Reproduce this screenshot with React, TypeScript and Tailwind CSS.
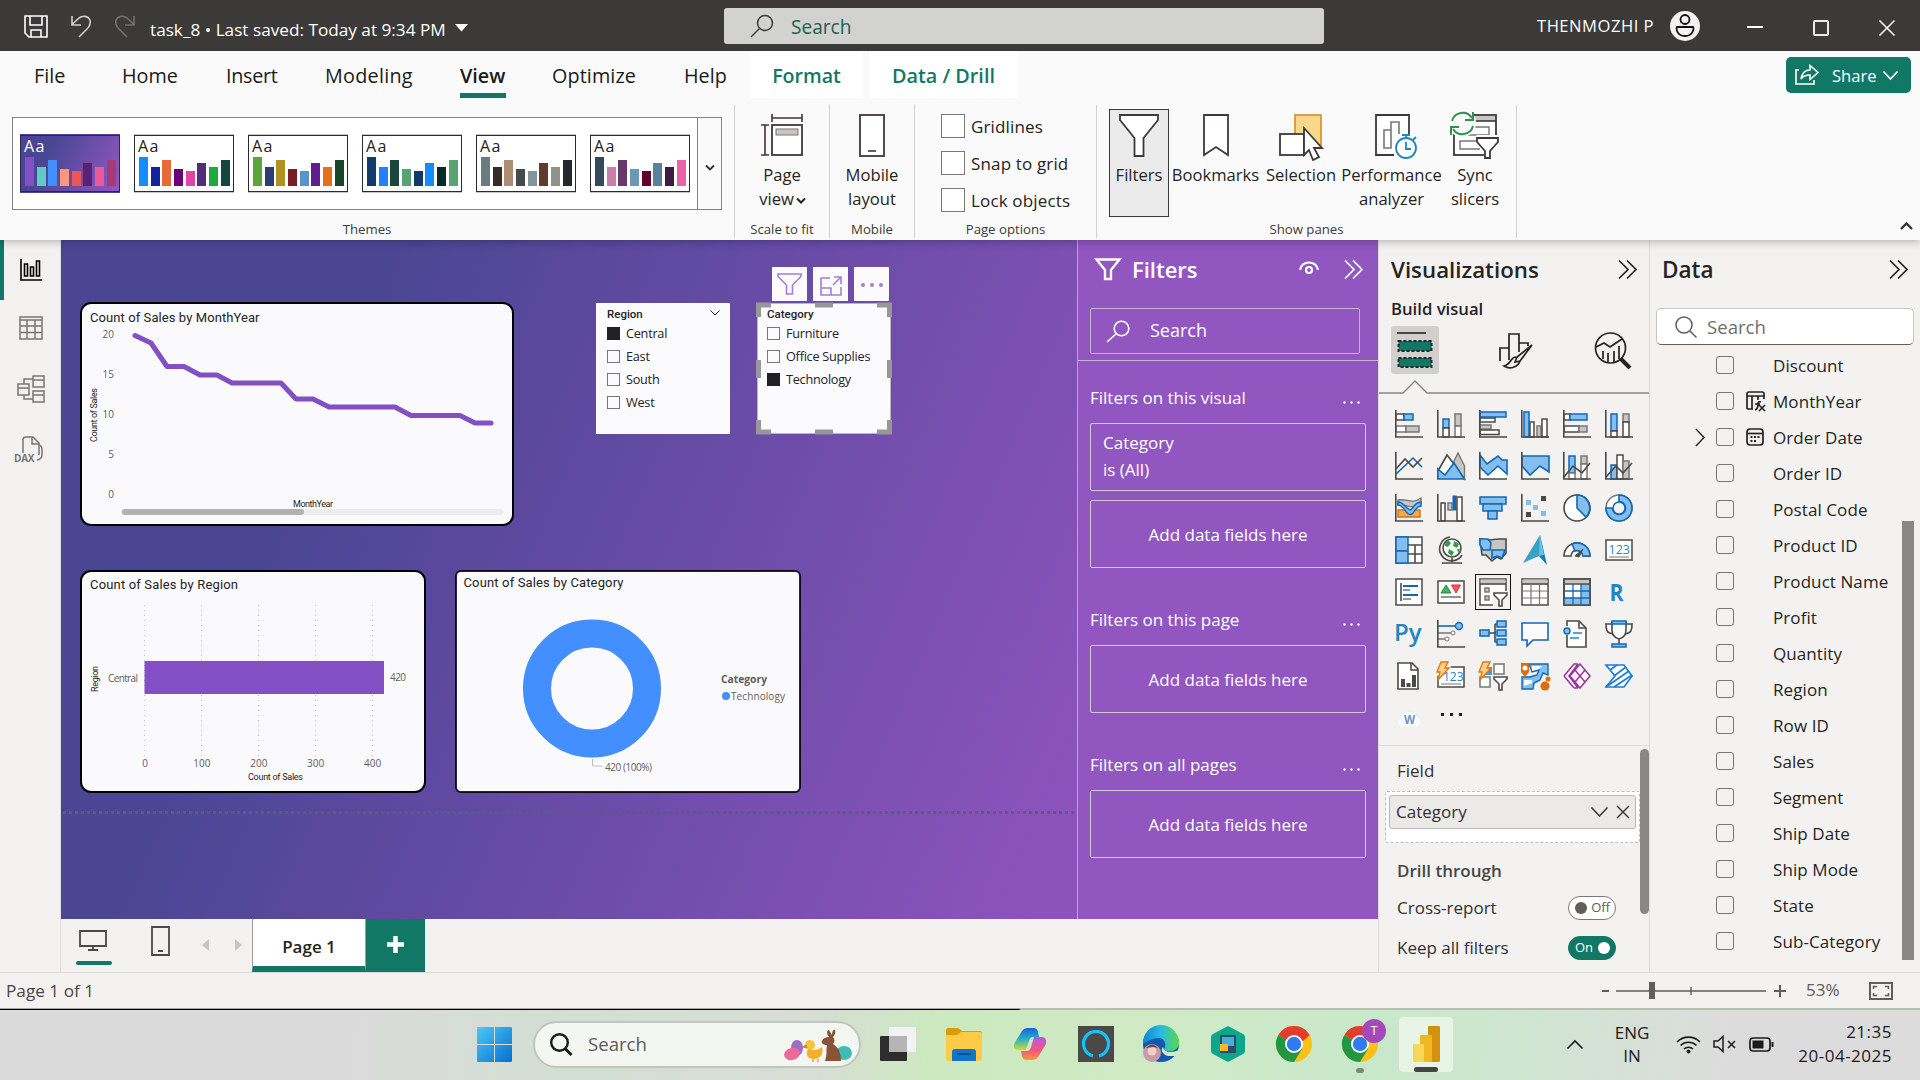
import React from "react";

const D = "#4b4a48";
const B = "#1068b8";
const L = "#83beec";
const G = "#c8c6c4";
const M = "#797775";
const W = "#ffffff";

type RectProps = { x: number; y: number; w: number; h: number; f?: string; s?: string; sw?: number };
const R = ({ x, y, w, h, f = W, s = M, sw = 1.5 }: RectProps) => (
  <rect x={x} y={y} width={w} height={h} fill={f} stroke={s} strokeWidth={sw} />
);
const P = ({ d, s = D, f = "none", w = 1.6 }: { d: string; s?: string; f?: string; w?: number }) => (
  <path d={d} stroke={s} fill={f} strokeWidth={w} />
);
const Axes = () => <P d="M.8 0V27H28" />;

const visuals: React.ReactNode[] = [
  <><R x={1} y={4} w={8} h={6} s={D} /><R x={9} y={4} w={9} h={6} f={L} s={B} /><R x={1} y={16} w={10} h={6} /><R x={11} y={16} w={13} h={6} f={G} /><Axes /></>,
  <><R x={6} y={9} w={6} h={9} f={L} s={B} /><R x={6} y={18} w={6} h={9} s={D} /><R x={18} y={4} w={6} h={12} f={G} /><R x={18} y={16} w={6} h={11} /><Axes /></>,
  <><R x={1} y={2} w={26} h={5} f={L} s={B} /><R x={1} y={8} w={15} h={4} s={D} /><R x={1} y={15} w={11} h={4} f={G} /><R x={1} y={20} w={19} h={4.5} s={D} /><Axes /></>,
  <><R x={3} y={2} w={5} h={25} f={L} s={B} /><R x={9} y={12} w={4} h={15} s={D} /><R x={16} y={16} w={4} h={11} f={G} /><R x={21} y={9} w={5} h={18} s={D} /><Axes /></>,
  <><R x={1} y={4} w={6} h={6} s={D} /><R x={7} y={4} w={17} h={6} f={L} s={B} /><R x={1} y={16} w={15} h={6} s={D} /><R x={16} y={16} w={8} h={6} f={G} /><Axes /></>,
  <><R x={6} y={4} w={6} h={17} f={L} s={B} /><R x={6} y={21} w={6} h={6} s={D} /><R x={18} y={4} w={6} h={8} f={G} /><R x={18} y={12} w={6} h={15} s={D} /><Axes /></>,
  <><P d="M1 22L18 6l9 9" s={B} /><P d="M1 17L10 7l8 8 9-9" /><Axes /></>,
  <><path d="M16 11L21 1l6.5 13v13z" fill={G} stroke={M} strokeWidth="1.4" /><P d="M1 19L10 3l7 9-9 13z" f={W} /><P d="M.8 17v10h26.6L17 11 8 23z" f={L} s={B} /></>,
  <><P d="M1 3l7 9L19 4l4 4h5v14l-9-8L9 23l-8-8z" f={L} s={B} /><path d="M1 17l8 8 10-9 8 7v4H1z" fill="#fff" /><Axes /></>,
  <><P d="M1 4h27v16l-9-6-10 9-8-9z" f={L} s={B} /><Axes /></>,
  <><R x={6} y={4} w={6} h={17} f={L} s={B} /><R x={6} y={21} w={6} h={6} /><R x={18} y={4} w={6} h={8} f={G} /><R x={18} y={12} w={6} h={15} /><P d="M1 25l9-11 9 7 8-10" /><Axes /></>,
  <><R x={6} y={13} w={6} h={14} f={L} s={B} /><R x={12} y={3} w={6} h={24} s={D} /><R x={18} y={9} w={6} h={18} f={G} /><P d="M1 25l10-11 7 7 9-10" /><Axes /></>,
  <><P d="M3 16h22v7H3z" f="#f7a94b" s="#d87010" w={1.4} /><P d="M3 6c9-2 13 5 23-2v6c-10 6-14 0-23 1z" f={G} s={M} w={1.4} /><P d="M3 11c7 0 8 12 14 9 3-2 4-8 9-8v-4c-8 1-8 8-11 8-4-1-6-8-12-8z" f={L} s={B} w={1.4} /><Axes /></>,
  <><R x={4} y={9} w={4} h={18} s={D} /><R x={11} y={9} w={4} h={7} f={G} /><R x={16} y={2} w={3} h={14} f={B} s={B} sw={1} /><R x={20} y={3} w={5} h={24} s={D} /><Axes /></>,
  <><R x={1} y={3} w={26} h={7} f={L} s={B} /><R x={4} y={10} w={19} h={7} f={L} s={B} /><R x={9} y={17} w={9} h={8} f={L} s={B} /></>,
  <><rect x="5" y="6" width="5" height="5" fill={L} /><rect x="12" y="11" width="5" height="5" fill={L} /><rect x="20" y="17" width="5" height="5" fill={L} /><rect x="20" y="2" width="5" height="5" fill={D} /><rect x="5" y="18" width="5" height="5" fill={D} /><Axes /></>,
  <><circle cx="14" cy="14" r="13" fill={W} stroke={D} strokeWidth="1.6" /><P d="M14 1a13 13 0 0 1 9 22L14 14z" f={L} s={B} /></>,
  <><circle cx="14" cy="14" r="13" fill={W} stroke={M} strokeWidth="1.5" /><P d="M14 1a13 13 0 1 1-13 13h6.5A6.5 6.5 0 1 0 14 7.500z" f={L} s={B} /><circle cx="14" cy="14" r="6" fill="#f3f2f1" stroke={B} strokeWidth="1.5" /></>,
  <><R x={1} y={1} w={26} h={26} s={D} /><R x={1} y={1} w={12} h={14} f={L} s={B} /><R x={1} y={15} w={12} h={12} f={L} s={B} /><P d="M13 9h14M20 9v18M13 18h14" /></>,
  <><circle cx="15" cy="12" r="9" fill={W} stroke={D} strokeWidth="1.6" /><path d="M8 8l3-4 3 3-3 4-3-1zM17 5l5 3-2 4-4-2zM12 13l5 3-2 4-4-3zM20 13h3l-2 4z" fill="#2f9e44" /><P d="M13 1A12 12 0 1 0 25 19M15 22v4M5 27h20" /></>,
  <><path d="M1 3l9 1 9-1h8v14l-5 6-4-2-5 4-6-6H3z" fill={G} stroke={D} strokeWidth="1.6" /><P d="M1 3h8l3 4-1 7H4L1 9zM13 14h13l-3 8-5-2-5 2z" f={L} s={B} /></>,
  <><path d="M19-1L2 27l16-7z" fill="#38a0cc" /><path d="M19-1l7 30-8-9z" fill="#1479b8" /><path d="M19-1l-1 21 5-1z" fill="#64c4dc" /></>,
  <><path d="M1 20a13 13 0 0 1 26 0h-7a6 6 0 0 0-12 0z" fill={W} stroke={D} strokeWidth="1.6" /><path d="M9 8a13 13 0 0 1 18 12h-7a6 6 0 0 0-8-5z" fill={L} stroke={B} strokeWidth="1.6" /><path d="M12 20l8-7-4 8z" fill={D} stroke={D} /></>,
  <><R x={1} y={4} w={26} h={20} s={D} /><text x="3.500" y="17.500" fontSize="12.500" fill="#2488cc" fontFamily="Open Sans, sans-serif">123</text><P d="M4 21h20" s={M} w={1} /></>,
  <><R x={1} y={1} w={26} h={26} s={D} /><P d="M6 5v18" /><P d="M8 8h15M8 17h15" s={B} w={2.2} /><P d="M8 12h7M8 21h8" s={M} w={1.6} /></>,
  <><R x={1} y={3} w={26} h={22} s={D} /><path d="M4 15l5-8 5 8z" fill="#4cae5c" stroke="#258a3a" /><path d="M14.500 7h9l-4.500 8z" fill="#f0575f" stroke="#d13438" /><P d="M4 19h20" s={M} /></>,
  <><R x={1} y={1} w={26} h={26} s={D} /><rect x="1.500" y="1.500" width="25" height="4" fill={G} /><P d="M1 6h26" /><R x={6} y={10} w={4} h={4} f={G} /><R x={6} y={18} w={4} h={4} f={G} /><path d="M13 13h17v17H14z" fill="#f3f2f1" /><P d="M15 15h13v2l-5 5v6h-3v-6l-5-5z" f={W} /></>,
  <><R x={1} y={1} w={26} h={26} s={D} /><rect x="1.500" y="1.500" width="25" height="4" fill={G} /><P d="M1 6h26" /><P d="M1 13h26M1 20h26M10 6v21M18.500 6v21" s={M} w={1.2} /></>,
  <><R x={1} y={1} w={26} h={26} s={D} /><rect x="18" y="6" width="9" height="21" fill={L} /><rect x="1" y="20" width="26" height="7" fill={L} /><rect x="1.500" y="1.500" width="25" height="4" fill={G} /><P d="M1 13h26M10 6v21M18 6v21M1 20h26" s={B} w={1.3} /><P d="M1 6h26M1 1h26v26H1z" /></>,
  <text x="4.500" y="22.500" fontSize="24" fontWeight="700" fill="#2185c5" fontFamily="Open Sans, sans-serif" textLength="14" lengthAdjust="spacingAndGlyphs">R</text>,
  <text x="-1" y="20.500" fontSize="24" fontWeight="600" fill="#2185c5" fontFamily="Open Sans, sans-serif">Py</text>,
  <><P d="M1 6h18" s={B} /><circle cx="22" cy="6" r="3.500" fill={L} stroke={B} strokeWidth="1.4" /><P d="M1 13h13M1 19h7" s={M} /><circle cx="16" cy="13" r="2" fill={W} stroke={M} /><circle cx="10" cy="19" r="2" fill={W} stroke={M} /><Axes /></>,
  <><P d="M10 13h7M16 4v18M16 4h3M16 22h3" /><R x={1} y={10} w={9} h={6} f={L} s={B} /><R x={18} y={1} w={9} h={6} f={L} s={B} /><R x={18} y={10} w={9} h={6} f={L} s={B} /><R x={18} y={19} w={9} h={6} f={L} s={B} /></>,
  <P d="M1 3h26v17H12l-6 6v-6H1z" s={B} f="#fbfbfb" />,
  <><P d="M4 1h12l7 7v19H4z" f={W} /><P d="M16 1v7h7" /><path d="M1 6h7v9H1z" fill="#f3f2f1" /><circle cx="4" cy="11" r="3" fill={L} stroke={B} strokeWidth="1.400" /><P d="M10 13h9M7 18h9" s="#2488cc" /></>,
  <><P d="M7 4H1c0 8 2 9 7 10M21 4h6c0 8-2 9-7 10" f={W} /><P d="M7 2h14v8c0 5-3 8-7 9-4-1-7-4-7-9zM14 19v6" f={W} /><R x={7} y={1} w={14} h={3} f={L} s={B} /><R x={7} y={24} w={14} h={3} f={L} s={B} /></>,
  <><P d="M3 1h14l6 6v20H3z" f={W} /><P d="M16 1v7h7" /><path d="M6 17h4v8H6zM11.500 21h4v4h-4zM17 13h4v12h-4z" fill={D} /></>,
  <><R x={1} y={5} w={26} h={20} s={D} /><path d="M-1-1h13l2 6-6 9H-1z" fill="#f3f2f1" /><text x="6" y="18.500" fontSize="12" fill="#2488cc" fontFamily="Open Sans, sans-serif">123</text><P d="M4 22h20" s={M} w={1} /><path d="M4 0h7L8 6h4L1 18l2-8H0z" fill="#ffd08a" stroke="#de7a13" strokeWidth="1.400" /></>,
  <><R x={1} y={15} w={10} h={10} s={M} /><R x={15} y={2} w={10} h={10} /><path d="M5 5h8v8H5z" fill="#5098cc" /><path d="M4 0h7L8 6h4L1 18l2-8H0z" fill="#ffd08a" stroke="#de7a13" strokeWidth="1.400" /><path d="M12 14h17v16H17z" fill="#f3f2f1" /><P d="M15 15h13v2l-5 5v6h-3v-6l-5-5z" f={W} /></>,
  <><path d="M8 2h19v11l-5-2-3 7-6 3-1 6H1V15h8l7-2 2-5-7 2z" fill={L} stroke={B} strokeWidth="1.400" /><path d="M11 4h10l-3 3-7 2zM3 18h8v3l-8 3z" fill="#fff" /><path d="M0 1h8v9l-4 5-4-5z" fill="#e06c08" /><circle cx="4" cy="6" r="2.500" fill={W} /><circle cx="24" cy="24" r="4.500" fill="#e06c08" /><circle cx="27" cy="17" r="2.500" fill="#e06c08" /></>,
  <g fill="none" stroke="#9a35a0" strokeWidth="1.500"><path d="M1 14L11 2h4M11 26L1 14M11 26h4M15 2L6 14l9 12M17 2l10 12-10 12-10-12z" fill="#fbf6fb" /><path d="M12 8l10 12M12 20L22 8" /></g>,
  <><P d="M1 3h18l8 11-8 11H1l9-11z" s="#1b7bdd" f="#fff" /><P d="M5 8L12 3M9 14L21 5M1 25L24 9M9 25l18-12" s="#1b7bdd" /></>,
  <><path d="M5 23a5 5 0 0 1 0-9 9 8 0 0 1 17-2 6 6 0 0 1 1 11z" fill="#fbfbfb" stroke="#eceff3" /><text x="9" y="20" fontSize="11.500" fontWeight="700" fill="#6c94c0" fontFamily="Open Sans, sans-serif">W</text></>,
  <><rect x="4" y="9" width="3" height="3" fill="#222" /><rect x="13" y="9" width="3" height="3" fill="#222" /><rect x="22" y="9" width="3" height="3" fill="#222" /></>,
];

const themes: { fg: string; dark?: boolean; c: string[] }[] = [
  { fg: "#fff", dark: true, c: ["#8250c4", "#5ecbc8", "#438fff", "#ff977e", "#eb5757", "#5b2071", "#ec5a96", "#a43b76"] },
  { fg: "#222", c: ["#118dff", "#12239e", "#e66c37", "#6b007b", "#e044a7", "#4f2f78", "#1aab40", "#15453f"] },
  { fg: "#222", c: ["#5aa63c", "#2f3c70", "#b09023", "#7a1c24", "#5b93cf", "#5f1f8a", "#e66f1c", "#16472b"] },
  { fg: "#222", c: ["#103c6e", "#1f83ff", "#1c4540", "#57a472", "#0f3a6b", "#118dff", "#0a2b26", "#57a472"] },
  { fg: "#222", c: ["#6b7a7c", "#372b28", "#ae8c70", "#404b4a", "#82969a", "#5f3a31", "#91918a", "#22292a"] },
  { fg: "#222", c: ["#324a5c", "#c97eab", "#69386c", "#6b98b5", "#63002c", "#5a8199", "#3f1c3f", "#e963a8"] },
];
const barH = [29, 19, 26, 17, 15, 23, 19, 26];

const Theme = ({ t }: { t: (typeof themes)[0] }) => (
  <div className={`w-[100px] shrink-0 border-y ${t.dark ? "border-[#4b4694] bg-linear-115 from-[#4b4694] from-30% to-[#9256c1]" : "border-[#c8c6c4] bg-white"}`}>
    <div className={`h-[57px] border ${t.dark ? "border-[#2c2750]" : "border-[#2b2b2b]"}`}>
      <div className="h-[19px] pl-[3px] text-[16px] leading-[21px] tracking-[1.5px]" style={{ color: t.fg }}>Aa</div>
      <div className="flex h-[31px] items-end gap-[2.700px] pl-1">
        {t.c.map((c, i) => <div key={i} className="w-[9px]" style={{ height: barH[i], background: c }} />)}
      </div>
    </div>
  </div>
);

const Svg = ({ w, h, c = "", children }: { w: number; h: number; c?: string; children: React.ReactNode }) => (
  <svg width={w} height={h} viewBox={`0 0 ${w} ${h}`} fill="none" stroke="currentColor" className={`block shrink-0 overflow-visible ${c}`}>{children}</svg>
);

const Chevrons = ({ c = "" }: { c?: string }) => (
  <Svg w={19} h={19} c={c}><path d="M1 .5l9 9-9 9M9 .5l9 9-9 9" strokeWidth="1.700" /></Svg>
);

const Group = ({ w, label, children }: { w: string; label: string; children: React.ReactNode }) => (
  <div className={`flex h-[133px] shrink-0 flex-col border-r border-[#d2d0ce] ${w}`}>
    <div className="h-[112px] shrink-0">{children}</div>
    <div className="h-[21px] shrink-0 text-center text-[13.200px] leading-[25px] text-[#3b3a39]">{label}</div>
  </div>
);

const Big = ({ w, icon, a, b, on }: { w: string; icon: React.ReactNode; a: string; b?: React.ReactNode; on?: boolean }) => (
  <div className={`flex h-[108px] shrink-0 flex-col items-center border pt-1 ${w} ${on ? "border-[#3b3a39] bg-[#ebebeb]" : "border-transparent"}`}>
    <div className="flex h-[49px] items-start">{icon}</div>
    <div className="whitespace-nowrap text-center text-[16.600px] leading-6 text-[#252423]">{a}{b && <><br />{b}</>}</div>
  </div>
);

const TitleBar = () => (
  <div className="flex h-[51px] bg-[#3b3a38] text-white">
    <div className="flex w-[724px] shrink-0 pt-[15px]">
      <Svg w={24} h={23} c="ml-[24px]"><path d="M1 1h22v21H5l-4-4zM6 1v9h12V1M7 22v-7h10v7" strokeWidth="1.600" /></Svg>
      <Svg w={20} h={23} c="ml-[23px] text-[#d2d0ce]"><path d="M1 1v9h9M1 9.500L8 3c4-3 9-2 11 2 1 4 0 6-3 9l-8 8" strokeWidth="1.600" /></Svg>
      <Svg w={20} h={23} c="ml-6 text-[#73716f]"><path d="M19 1v9h-9M19 9.500L12 3C8 0 3 1 1 5 0 9 1 11 4 14l8 8" strokeWidth="1.600" /></Svg>
      <div className="ml-[15px] w-[297px] whitespace-nowrap text-[17.200px] leading-[29px]">task_8 • Last saved: Today at 9:34 PM</div>
      <Svg w={13} h={8} c="ml-[8px] mt-[9px]"><path d="M0 0h13L6.500 7.500z" fill="currentColor" stroke="none" /></Svg>
    </div>
    <div className="mt-2 flex h-9 w-[600px] shrink-0 items-center rounded-[3px] bg-[#d2d2d0]">
      <Svg w={24} h={24} c="ml-[26px] text-[#3b3a39]"><circle cx="15" cy="9" r="7.500" strokeWidth="1.500" /><path d="M9.500 14.500L1 23" strokeWidth="1.500" /></Svg>
      <div className="ml-[17px] pt-[2px] text-[19.100px] text-[#1f6152]">Search</div>
    </div>
    <div className="ml-[213px] flex h-[52px] items-center">
      <div className="w-[133px] whitespace-nowrap pt-px text-[16.600px] tracking-[.5px]">THENMOZHI P</div>
      <Svg w={30} h={30}><circle cx="15" cy="15" r="15" fill="#f3f2f1" stroke="none" /><circle cx="15" cy="8.500" r="4.500" stroke="#111" strokeWidth="1.800" /><path d="M7 16h16c1 0 1 9-8 9s-9-9-8-9z" stroke="#111" strokeWidth="1.800" /></Svg>
      <div className="ml-[47px] mt-[2px] h-[1.500px] w-4 bg-white" />
      <div className="ml-[50px] mt-1 h-4 w-4 rounded-[2px] border-2 border-white/90" />
      <Svg w={16} h={16} c="ml-[50px] mt-1"><path d="M.5.5l15 15M15.500.5l-15 15" strokeWidth="1.500" /></Svg>
    </div>
  </div>
);

const Tabs = () => (
  <div className="flex h-[47px] pl-[34px] text-[19.800px] leading-[49px] text-[#1b1a19]">
    <div className="w-[88px]">File</div>
    <div className="w-[104px]">Home</div>
    <div className="w-[99px] tracking-[-.3px]">Insert</div>
    <div className="w-[135px] tracking-[.25px]">Modeling</div>
    <div className="w-[92px]"><div className="h-full w-[46px] border-b-[5px] border-[#117865] font-semibold">View</div></div>
    <div className="w-[132px] tracking-[.1px]">Optimize</div>
    <div className="w-[66px]">Help</div>
    <div className="w-[113px] bg-white text-center text-[19.600px] font-semibold text-[#117865]">Format</div>
    <div className="ml-[6px] w-[149px] bg-white text-center text-[19.800px] font-semibold text-[#117865]">Data / Drill</div>
    <div className="ml-[768px] mt-[6px] flex h-9 w-[125px] items-center rounded-[5px] bg-[#117865] text-[16.600px] text-white">
      <Svg w={24} h={22} c="ml-[9px]"><path d="M4 6H1v14h18v-4" strokeWidth="1.600" /><path d="M6 15C7 9 10 6 15 6V1.500l8 7-8 7V11c-4 0-7 1-9 4z" strokeWidth="1.600" /></Svg>
      <span className="ml-[13px]">Share</span>
      <Svg w={15} h={9} c="ml-[6px]"><path d="M.5.5l7 7.500 7-7.500" strokeWidth="1.700" /></Svg>
    </div>
  </div>
);

const Check = ({ label }: { label: string }) => (
  <div className="flex h-[37px] items-start text-[17px] leading-[26px] tracking-[.15px] text-[#252423]">
    <div className="mr-[6px] h-6 w-6 border border-[#7a7876] bg-white" />{label}
  </div>
);

const Ribbon = () => (
  <div className="flex h-[142px] pt-[7px]">
    <Group w="w-[735px] pl-3 [&>div:last-child]:pr-3" label="Themes">
      <div className="pt-3">
        <div className="flex h-[93px] w-[710px] items-center border border-[#868482] bg-white">
          <div className="flex w-[684px] gap-[14px] pl-[7px]">{themes.map((t, i) => <Theme key={i} t={t} />)}</div>
          <div className="flex h-full flex-1 items-center justify-center border-l border-[#868482] bg-[#fafafa] pt-2">
            <Svg w={8} h={6}><path d="M0 .5l4 4 4-4" stroke="#333" strokeWidth="1.800" /></Svg>
          </div>
        </div>
      </div>
    </Group>
    <Group w="w-[95px]" label="Scale to fit">
      <div className="pt-1"><Big w="w-full" a="Page" b={<>view<Svg w={8} h={6} c="ml-[3px] inline-block align-middle"><path d="M0 .5l4 4 4-4" strokeWidth="2" /></Svg></>} icon={
        <Svg w={42} h={43} c="text-[#3b3a39]"><rect x="11" y="11" width="30" height="30" fill="#fff" strokeWidth="1.800" /><path d="M11 0v8M41 0v8M11 4h30M0 11h8M0 41h8M4 11v30" strokeWidth="1.600" /><rect x="15" y="15" width="22" height="6" fill={G} stroke={M} /></Svg>} /></div>
    </Group>
    <Group w="w-[85px]" label="Mobile">
      <div className="pt-1"><Big w="w-full" a="Mobile" b="layout" icon={
        <Svg w={26} h={43} c="text-[#3b3a39]"><rect x="1" y="1" width="24" height="41" fill="#fff" strokeWidth="1.800" /><path d="M9 37h8" strokeWidth="1.600" /></Svg>} /></div>
    </Group>
    <Group w="w-[182px]" label="Page options">
      <div className="pl-[26px] pt-[9px]"><Check label="Gridlines" /><Check label="Snap to grid" /><Check label="Lock objects" /></div>
    </Group>
    <Group w="w-[420px]" label="Show panes">
      <div className="flex pl-3 pt-1">
        <Big on w="w-[60px]" a="Filters" icon={<Svg w={40} h={43} c="text-[#3b3a39]"><path d="M1 1h38v5L24.500 24v18h-9V24L1 6z" fill="#fff" strokeWidth="1.800" /></Svg>} />
        <Big w="w-[93px]" a="Bookmarks" icon={<Svg w={26} h={43} c="text-[#3b3a39]"><path d="M1 1h24v40L13 33 1 41z" fill="#fff" strokeWidth="1.800" /></Svg>} />
        <Big w="w-[78px]" a="Selection" icon={<Svg w={44} h={46} c="text-[#3b3a39]"><rect x="16" y="1" width="26" height="30" fill="#f8d88c" stroke="#e08a1e" strokeWidth="1.600" /><rect x="1" y="20" width="24" height="21" fill="#fff" strokeWidth="1.800" /><path d="M25 14l18 20h-8l5 9-6 3-4-10-5 5z" fill="#fff" strokeWidth="1.800" /></Svg>} />
        <Big w="w-[103px]" a="Performance" b="analyzer" icon={<Svg w={42} h={46} c="ml-2 text-[#3b3a39]"><path d="M34 20V1H1v40h18" fill="#fff" strokeWidth="1.800" /><path d="M16 34H9V16h7zM16 34V8h8v12" stroke={M} strokeWidth="1.600" /><g stroke="#2185c5" strokeWidth="1.800"><circle cx="31" cy="34" r="10" fill="#fff" /><path d="M31 28v7h5M27 21h8M31 21v3M38 26l3-3" /></g></Svg>} />
        <Big w="w-[64px]" a="Sync" b="slicers" icon={<Svg w={50} h={48} c="-mt-[3px] text-[#3b3a39]"><rect x="4" y="4" width="42" height="40" fill="#fff" strokeWidth="1.800" /><rect x="24" y="5" width="21" height="5" fill={G} stroke="none" /><path d="M22 10h24" strokeWidth="1.600" /><path d="M22 16h17v8H8M28 30H10v8h20" stroke={M} strokeWidth="1.400" /><circle cx="12" cy="12" r="14" fill="#fafafa" stroke="none" /><g stroke="#2f9249" strokeWidth="2"><path d="M2 10a11 11 0 0 1 20-3M23 1v8h-8M23 15a11 11 0 0 1-20 3M1 24v-8h8" /></g><path d="M26 24h26v24H34V36z" fill="#fafafa" stroke="none" /><path d="M27 27h21v4l-8 9v7h-5v-7l-8-9z" fill="#fff" strokeWidth="1.800" /></Svg>} />
      </div>
    </Group>
    <div className="ml-auto mr-[7px] mt-[117px]"><Svg w={13} h={8}><path d="M1 7l5.500-5.500L12 7" stroke="#333" strokeWidth="2.300" /></Svg></div>
  </div>
);

const Rail = () => (
  <div className="flex w-[61px] shrink-0 border-r border-[#e1dfdd] bg-[#f3f2f1]">
    <div className="h-[60px] w-[4px] bg-[#117865]" />
    <div className="flex w-[54px] flex-col items-center text-[#797775]">
      <Svg w={22} h={22} c="mt-[19px] text-black"><path d="M1 0v21h21" strokeWidth="1.600" /><path d="M4.500 5h3v12h-3zM10.500 8h3v9h-3zM16.500 2h3v15h-3z" strokeWidth="1.600" /></Svg>
      <Svg w={24} h={24} c="mt-[35px]"><path d="M1 1h22v22H1zM1 4h22M1 10h22M1 16.500h22M8 4v19M16 4v19" strokeWidth="1.500" /></Svg>
      <Svg w={28} h={28} c="mt-[35px]"><path d="M1 9h11v11H1zM1 13h11M16 1h11v11H16zM16 5h11M16 16h11v11H16zM16 20h11M7 9V4h9M7 20v4h9" strokeWidth="1.500" /></Svg>
      <div className="relative mt-[33px] h-[27px] w-[28px]">
        <Svg w={28} h={27} c="-ml-[2px]"><path d="M8 17V4q0-3 3-3h7l6 6v12M17 1v7h7M25 9q2 2 2 4v6q0 4-5 5" strokeWidth="1.500" /></Svg>
        <span className="absolute -left-[3px] bottom-0 bg-[#f3f2f1] text-[10px] font-bold leading-[9px] tracking-tight">DAX</span>
      </div>
    </div>
  </div>
);

const Item = ({ label, on }: { label: string; on?: boolean }) => (
  <div className="flex h-[23px] items-center">
    <div className={`mr-[6px] h-[13px] w-[13px] border ${on ? "border-[#212121] bg-[#212121]" : "border-[#7a7876]"}`} />{label}
  </div>
);

const Slicer = ({ title, items, on, chev }: { title: string; items: string[]; on: string; chev?: boolean }) => (
  <div className={`h-full w-full bg-[#fbfafd] text-[12.700px] tracking-[-.25px] text-[#252423] ${chev ? "pl-[11px]" : "pl-[10px]"}`}>
    <div className="flex h-[19px] items-center justify-between pr-[10px] pt-[4px] font-['Roboto'] text-[11.500px] font-medium tracking-normal">
      {title}{chev && <Svg w={10} h={6} c="-mt-1"><path d="M.5.5L5 5l4.500-4.500" /></Svg>}
    </div>
    {items.map((i) => <Item key={i} label={i} on={i === on} />)}
  </div>
);

const HeadIcon = ({ children }: { children: React.ReactNode }) => (
  <div className="flex h-[34px] w-[35px] items-center justify-center bg-[#fbfafd] text-[#a67ed6]">{children}</div>
);

const LineCard = () => (
  <Svg w={432} h={222}>
    <g stroke="none" fontFamily="Roboto, sans-serif" fill="#252423">
      <text x="9" y="19" fontSize="13" textLength="169.500">Count of Sales by MonthYear</text>
      <text x="212" y="204" fontSize="9" textLength="40">MonthYear</text>
      <text transform="translate(16 139) rotate(-90)" fontSize="9" textLength="54">Count of Sales</text>
    </g>
    <g stroke="none" fill="#605e5c" fontSize="10" textAnchor="end">
      {[20, 15, 10, 5, 0].map((v, i) => <text key={v} x="33" y={35 + i * 40}>{v}</text>)}
    </g>
    <path d="M54 32.500L70 40 86 63.500h17L119 72h17L151 80h49l15 16h17L248 104h66L330 112.500h49L394 120h16" stroke="#8250c4" strokeWidth="5" strokeLinejoin="round" strokeLinecap="round" />
    <rect x="41" y="206" width="382" height="6" rx="3" fill="#ededef" stroke="none" />
    <rect x="41" y="206" width="182" height="6" rx="3" fill="#b2b1b3" stroke="none" />
  </Svg>
);

const BarCard = () => (
  <Svg w={344} h={221}>
    <g stroke="#c8c6c4" strokeDasharray="1 4">{[63, 120, 177, 234, 291].map((x) => <path key={x} d={`M${x}.5 34V186`} />)}</g>
    <rect x="63.500" y="90" width="239.500" height="33" fill="#8250c4" stroke="none" />
    <g stroke="none" fontFamily="Roboto, sans-serif" fill="#252423">
      <text x="9" y="18" fontSize="13" textLength="148">Count of Sales by Region</text>
      <text x="167" y="209" fontSize="9" textLength="55">Count of Sales</text>
      <text transform="translate(17 121) rotate(-90)" fontSize="9" textLength="26">Region</text>
    </g>
    <g stroke="none" fill="#605e5c" fontSize="10">
      <text x="27" y="110.500" textLength="30">Central</text>
      <text x="309" y="110" textLength="16">420</text>
      {[0, 100, 200, 300, 400].map((v, i) => <text key={v} x={64 + i * 56.9} y="196" textAnchor="middle">{v}</text>)}
    </g>
  </Svg>
);

const DonutCard = () => (
  <Svg w={344} h={221}>
    <circle cx="136" cy="117.500" r="55" stroke="#438fff" strokeWidth="28" />
    <path d="M136.500 188v7h10" stroke="#c0bfc0" />
    <text x="7.500" y="16" fontSize="13" stroke="none" fontFamily="Roboto, sans-serif" fill="#252423" textLength="160">Count of Sales by Category</text>
    <g stroke="none" fill="#605e5c" fontSize="10">
      <text x="149" y="199.500" textLength="47">420 (100%)</text>
      <text x="265" y="111.500" fontWeight="700" textLength="46" lengthAdjust="spacingAndGlyphs">Category</text>
      <text x="275" y="129" textLength="54">Technology</text>
      <circle cx="270" cy="125" r="4" fill="#438fff" />
    </g>
  </Svg>
);

const Canvas = () => (
  <div className="relative h-[679px] w-[1016px] overflow-hidden bg-linear-[113deg] from-[#4b4694] from-26% to-[#8c53bc] to-96%">
    <div className="absolute left-[20px] top-[63px] h-[222px] w-[432px] rounded-[10px] bg-[#fafafd] outline-2 -outline-offset-1 outline-black"><LineCard /></div>
    <div className="absolute left-[20px] top-[331px] h-[221px] w-[344px] rounded-[10px] bg-[#fafafd] outline-2 -outline-offset-1 outline-black"><BarCard /></div>
    <div className="absolute left-[395px] top-[331px] h-[221px] w-[344px] rounded-[5px] bg-[#fafafd] outline-2 -outline-offset-1 outline-black/85"><DonutCard /></div>
    <div className="absolute left-[535px] top-[63px] h-[131px] w-[134px]"><Slicer chev title="Region" items={["Central", "East", "South", "West"]} on="Central" /></div>
    <div className="absolute left-[696px] top-[63px] h-[131px] w-[134px]">
      <Slicer title="Category" items={["Furniture", "Office Supplies", "Technology"]} on="Technology" />
      <svg className="absolute inset-0 overflow-visible" width="134" height="131" fill="none">
        <rect x=".5" y=".5" width="133" height="130" stroke="#b9b8ba" />
        <path d="M1.500 14V2H14M120 2h12.500v12M132.500 117v12H120M14 129H1.500v-12M58 2h18M58 129h18M1.500 57v18M132.500 57v18" stroke="#979698" strokeWidth="5" />
      </svg>
    </div>
    <div className="absolute left-[711px] top-[27px] flex gap-[6px]">
      <HeadIcon><Svg w={25} h={22}><path d="M1 1h23v2.500L15.500 12v9h-6v-9L1 3.500z" strokeWidth="1.600" /></Svg></HeadIcon>
      <HeadIcon><Svg w={22} h={20} c="mt-1"><path d="M10 2H1v17h20v-8M1 12h10v7M14 1h7v7M21 1l-8 8" strokeWidth="1.600" /></Svg></HeadIcon>
      <HeadIcon><Svg w={24} h={4} c="mt-[2px]"><g fill="currentColor" stroke="none"><circle cx="3" cy="2" r="2" /><circle cx="12" cy="2" r="2" /><circle cx="21" cy="2" r="2" /></g></Svg></HeadIcon>
    </div>
    <svg className="absolute left-0 top-[571px]" width="1016" height="3"><path d="M2 1.500H1016" stroke="#5e5f66" strokeWidth="3" strokeDasharray="3 3" /></svg>
  </div>
);

const PageTabs = () => (
  <div className="flex h-[53px] bg-[#f3f2f1] text-[#4b4a48]">
    <div className="ml-[15px] w-9 pt-[11px]">
      <Svg w={28} h={21} c="ml-[3px]"><path d="M1 1h26v15H1zM14 16v4M9 20h10" strokeWidth="1.800" /></Svg>
      <div className="mt-[10px] h-1 w-9 rounded bg-[#117865]" />
    </div>
    <Svg w={19} h={31} c="ml-[39px] mt-[7px]"><path d="M1 1h17v28H1zM7 25h5" strokeWidth="1.800" /></Svg>
    <Svg w={7} h={12} c="ml-8 mt-[20px] text-[#c8c6c4]"><path d="M7 0v12L0 6z" fill="currentColor" stroke="none" /></Svg>
    <Svg w={7} h={12} c="ml-[26px] mt-[20px] text-[#c8c6c4]"><path d="M0 0v12l7-6z" fill="currentColor" stroke="none" /></Svg>
    <div className="ml-[10px] w-[114px] border-x border-b-[6px] border-x-[#a19f9d] border-b-[#117865] bg-white text-center text-[17px] font-semibold leading-[55px] text-[#252423]">Page 1</div>
    <div className="flex w-[59px] items-center justify-center bg-[#117865] pb-[2px] text-white"><Svg w={17} h={17}><path d="M8.500 0v17M0 8.500h17" strokeWidth="4.500" /></Svg></div>
  </div>
);

const Dots = () => <Svg w={17} h={3}><g fill="currentColor" stroke="none"><circle cx="1.500" cy="1.500" r="1.200" /><circle cx="8.500" cy="1.500" r="1.200" /><circle cx="15.500" cy="1.500" r="1.200" /></g></Svg>;

const FilterGroup = ({ title, field }: { title: string; field?: boolean }) => (
  <div>
    <div className="flex h-[50px] items-center justify-between pr-[18px]">{title}<div className="mt-[9px]"><Dots /></div></div>
    {field && <div className="mb-[9px] h-[68px] w-[276px] rounded-[2px] border border-[#cfc9d2] pl-3 pt-[5px] leading-[27px]">Category<br />is (All)</div>}
    <div className="h-[68px] w-[276px] rounded-[2px] border border-[#cfc9d2] text-center leading-[67px]">Add data fields here</div>
  </div>
);

const Filters = () => (
  <div className="h-[679px] w-[301px] shrink-0 border-l border-[#b8a8c0] bg-[#9256c1] text-[17px] text-white">
    <div className="flex h-[60px] items-center pb-[2px] pl-[17px]">
      <Svg w={26} h={22}><path d="M1.500 1.500h23L16 12v9h-6v-9z" strokeWidth="2.400" /></Svg>
      <div className="ml-[11px] w-[167px] text-[22px] font-semibold">Filters</div>
      <Svg w={20} h={14} c="-mt-[2px]"><path d="M1 9c1-10 17-10 18 0" strokeWidth="2.200" /><circle cx="10" cy="9" r="3" strokeWidth="2.200" /></Svg>
      <Chevrons c="ml-[25px]" />
    </div>
    <div className="ml-3 mt-2 flex h-[46px] w-[270px] items-center rounded-[2px] border border-[#c5b6cc]">
      <Svg w={24} h={23} c="ml-[15px]"><circle cx="15.500" cy="8.500" r="7.300" strokeWidth="1.600" /><path d="M10 14l-9 8" strokeWidth="1.600" /></Svg>
      <div className="ml-5 pb-[2px] text-[18px]">Search</div>
    </div>
    <div className="mt-[6px] border-t border-[#c5b6cc]" />
    <div className="flex flex-col gap-[27px] pl-3 pt-3">
      <FilterGroup title="Filters on this visual" field />
      <FilterGroup title="Filters on this page" />
      <FilterGroup title="Filters on all pages" />
    </div>
  </div>
);

const Toggle = ({ on }: { on?: boolean }) => (
  <div className={`flex h-6 w-12 items-center justify-between rounded-full border pl-[6px] pr-[5px] text-[13px] ${on ? "border-[#117865] bg-[#117865] text-white" : "border-[#7a7876] bg-white text-[#605e5c]"}`}>
    {!on && <i className="h-3 w-3 rounded-full bg-[#605e5c]" />}
    <span>{on ? "On" : "Off"}</span>
    {on && <i className="h-3 w-3 rounded-full bg-white" />}
  </div>
);

const Visualizations = () => (
  <div className="flex h-[732px] w-[272px] shrink-0 flex-col border-x border-[#dedcda] bg-[#f3f2f1] text-[17px] text-[#323130]">
    <div className="flex h-[59px] items-center pl-3 text-[22.300px] font-semibold text-[#252423]"><div className="w-[227px]">Visualizations</div><Chevrons /></div>
    <div className="h-[27px] pl-3 text-[16.700px] font-semibold leading-[20px] text-[#252423]">Build visual</div>
    <div className="flex h-12 pl-3 text-[#252423]">
      <div className="h-12 w-12 rounded-[3px] bg-[#d2d0ce] p-[6px]">
        <Svg w={36} h={36}><path d="M0 1h29" strokeWidth="1.600" /><rect x="1.500" y="9" width="33" height="10" fill="#117865" strokeWidth="2" strokeDasharray="3 2" /><rect x="1.500" y="26" width="33" height="9" fill="#117865" strokeWidth="2" strokeDasharray="3 2" /></Svg>
      </div>
      <Svg w={34} h={36} c="ml-[60px] mt-[7px]"><path d="M1 28V15h9M10 27V1h10v18M20 10h9v3" strokeWidth="1.700" /><path d="M33 12L18 24l-2 5 5-1zM17 24c-6 0-4 7-12 9 6 4 14 1 16-5" strokeWidth="1.700" fill="#f3f2f1" /></Svg>
      <Svg w={36} h={38} c="ml-[62px] mt-[6px]"><circle cx="15.500" cy="16" r="15" strokeWidth="1.700" /><path d="M26 27l9 9" strokeWidth="4" /><path d="M1 15l8-4 6 4 12-8M8 19v8M13 21v10M19 19v11M24 14v13" strokeWidth="1.700" /></Svg>
    </div>
    <Svg w={270} h={14} c="mt-[6px]"><path d="M0 13h24L36 1l12 12h222" stroke="#8a8886" strokeWidth="1.400" /></Svg>
    <div className="grid h-[352px] grid-cols-[repeat(6,42px)] grid-rows-[repeat(8,42px)] border-b border-[#dedcda] pl-4 pt-4">
      {visuals.map((v, i) => (
        <div key={i} className={i === 26 ? "-ml-1 -mt-1 h-9 w-9 border border-[#111] p-[3px]" : ""}>
          <Svg w={28} h={28}><g stroke="none">{v}</g></Svg>
        </div>
      ))}
    </div>
    <div className="flex h-[226px]">
      <div className="w-[261px] pl-[6px]">
        <div className="h-[45px] pl-3 leading-[49px]">Field</div>
        <div className="h-[52px] w-[255px] rounded-[2px] border border-dashed border-[#c0bebc] bg-white p-[3px]">
          <div className="flex h-[34px] w-[247px] items-center rounded-[3px] border border-[#b9b7b5] bg-[#ebeae9] pl-[6px]">
            <div className="w-[195px]">Category</div>
            <Svg w={17} h={10}><path d="M.5.5l8 8.500 8-8.500" strokeWidth="1.400" /></Svg>
            <Svg w={12} h={12} c="ml-[9px]"><path d="M0 0l12 12M12 0L0 12" strokeWidth="1.400" /></Svg>
          </div>
        </div>
        <div className="h-[45px] pl-3 font-semibold leading-[56px] text-[#484644]">Drill through</div>
        <div className="flex h-10 items-center justify-between pl-3 pr-6">Cross-report<Toggle /></div>
        <div className="flex h-10 items-center justify-between pl-3 pr-6">Keep all filters<Toggle on /></div>
      </div>
      <div className="mt-[3px] h-[165px] w-[9px] rounded-full bg-[#8a8886]" />
    </div>
  </div>
);

const fields = ["Discount", "MonthYear", "Order Date", "Order ID", "Postal Code", "Product ID", "Product Name", "Profit", "Quantity", "Region", "Row ID", "Sales", "Segment", "Ship Date", "Ship Mode", "State", "Sub-Category"];

const DataPane = () => (
  <div className="flex h-[732px] flex-1 flex-col bg-[#f3f2f1] text-[#252423]">
    <div className="flex h-[59px] items-center pl-3 text-[22.500px] font-semibold"><div className="w-[227px]">Data</div><Chevrons /></div>
    <div className="ml-[6px] mt-[9px] flex h-[37px] w-[258px] items-center rounded-[5px] border border-[#c8c6c4] border-b-[#605e5c] bg-white">
      <Svg w={22} h={22} c="ml-[18px] text-[#605e5c]"><circle cx="9" cy="9" r="8" strokeWidth="1.500" /><path d="M15 15l6.500 6.500" strokeWidth="1.500" /></Svg>
      <div className="ml-[10px] text-[18.600px] text-[#706e6c]">Search</div>
    </div>
    <div className="flex flex-1">
      <div className="w-[252px] pt-[2px]">
        {fields.map((f, i) => (
          <div key={f} className="flex h-9 items-center text-[17px]">
            <div className="w-[66px] pl-[45px]">{i === 2 && <Svg w={10} h={17}><path d="M1 0l8 8.500-8 8.500" strokeWidth="1.400" /></Svg>}</div>
            <div className="h-[18px] w-[18px] rounded-[3px] border-[1.500px] border-[#7a7876]" />
            <div className="w-[39px] pl-3">
              {i === 1 && <Svg w={20} h={20}><path d="M1 17V3q0-2 2-2h13q2 0 2 2v5M1 17q0 1 2 1h4M1 5h17M6 5v13M12 5v4M9 19q3-1 3-6 0-3 3-2M9 13h5M13 14l6 6M19 14l-6 6" strokeWidth="1.700" /></Svg>}
              {i === 2 && <Svg w={18} h={18}><rect x="1" y="1" width="16" height="16" rx="3" strokeWidth="1.700" /><path d="M1 5.500h16" strokeWidth="1.700" /><path d="M4.500 9h2M8 9h2M11.500 9h2M4.500 13h2M8 13h2" strokeWidth="2" /></Svg>}
            </div>
            <div className="whitespace-nowrap pt-px tracking-[.08px]">{f}</div>
          </div>
        ))}
      </div>
      <div className="mt-[176px] h-[439px] w-3 bg-[#8a8886]" />
    </div>
  </div>
);

const Status = () => (
  <div className="flex h-[38px] shrink-0 border-t border-[#dcdad8] bg-[#f3f2f1] text-[#484644]">
    <div className="flex h-[37px] w-[1020px] flex-col border-b-2 border-b-[#a9aaa8]"><div className="flex-1 border-b border-black pl-[6px] text-[17.200px] leading-[36px]">Page 1 of 1</div></div>
    <div className="flex h-[37px] flex-1 items-center border-b-2 border-[#b5c0b0] text-[#605e5c]">
      <div className="ml-[582px] h-[2px] w-[7px] bg-[#605e5c]" />
      <Svg w={150} h={18} c="ml-[7px]"><path d="M0 9h150M75 5v8" strokeWidth="1.400" /><rect x="33" y="0" width="6" height="17" fill="currentColor" stroke="none" /></Svg>
      <Svg w={12} h={12} c="ml-2"><path d="M6 0v12M0 6h12" strokeWidth="2" /></Svg>
      <div className="ml-5 w-[63px] pb-px text-[17px]">53%</div>
      <Svg w={24} h={18}><path d="M1 1h22v16H1z" strokeWidth="2" /><path d="M4.500 7V4.500H8M16 4.500h3.500V7M19.500 11v2.500H16M8 13.500H4.500V11" strokeWidth="1.500" /></Svg>
    </div>
  </div>
);

const Chrome = () => (
  <Svg w={36} h={36}><g stroke="none"><circle cx="18" cy="18" r="18" fill="#fbc116" /><path d="M18 18L2.400 9A18 18 0 0 1 33.600 9z" fill="#e33b2e" /><path d="M18 18L2.400 9A18 18 0 0 0 18 36l8-13z" fill="#229642" /><path d="M18 9h15.600L26 16z" fill="#e33b2e" /><circle cx="18" cy="18" r="9" fill="#fff" /><circle cx="18" cy="18" r="7.200" fill="#2f7cf0" /></g></Svg>
);

const Taskbar = () => (
  <div className="flex h-[70px] shrink-0 items-center bg-[linear-gradient(95deg,#dadada_18%,#d3dfd3_30%,#d8ddd6_42%,#cce9bf_49%,#d0eac5_60%,#c8e8cb_72%,#cfe6d0_79%,#dcdcdc_90%)] pb-[2px] text-[#1b1b1b]">
    <Svg w={35} h={35} c="ml-[477px]">
      <defs><linearGradient id="win" x1="0" y1="0" x2="1" y2="1"><stop stopColor="#4cc8fa" /><stop offset="1" stopColor="#0670cf" /></linearGradient></defs>
      <path d="M0 1q0-1 1-1h16v17H0zM18 0h16q1 0 1 1v16H18zM0 18h17v17H1q-1 0-1-1zM18 18h17v16q0 1-1 1H18z" fill="url(#win)" stroke="none" />
    </Svg>
    <div className="ml-[21px] flex h-[47px] w-[328px] items-center rounded-full border-2 border-[#bfc6bf] bg-[#f3f6f1]">
      <Svg w={22} h={23} c="ml-[15px]"><circle cx="9.500" cy="9.500" r="8.300" strokeWidth="2.400" /><path d="M15.500 16l6 6" strokeWidth="3" /></Svg>
      <div className="ml-4 w-[61px] text-[18.600px] text-[#5c5c5c]">Search</div>
      <Svg w={68} h={34} c="ml-[135px] mt-1">
        <g stroke="none">
          <ellipse cx="13" cy="19" rx="6" ry="8" fill="#9a6fc8" /><ellipse cx="8" cy="25" rx="8" ry="6" fill="#ee6a9a" transform="rotate(-15 8 25)" />
          <circle cx="26" cy="16" r="5" fill="#f8c43c" /><path d="M24 20c-3 6 0 10 6 10s10-5 8-12c-4 3-8 4-14 2z" fill="#f9ad28" /><path d="M22 16l-3 2 4 1zM29 30v3M34 30v3" fill="#e07818" stroke="#e07818" />
          <ellipse cx="60" cy="24" rx="8" ry="7" fill="#3cbcb4" />
          <path d="M45 8c-3-4-2-7 0-7l3 5c0-3 1-6 3-5 1 2 0 5-2 7 2 2 2 5 0 7 5 3 8 8 8 17H41l1-4c1-4 0-8 1-12-4 0-6-2-5-4 1-3 4-4 7-4z" fill="#8a5236" />
        </g>
      </Svg>
    </div>
    <Svg w={36} h={34} c="ml-[19px]"><g stroke="none"><rect x="0" y="9" width="27" height="25" rx="1" fill="#2d2d2d" /><rect x="9" y="0" width="27" height="25" rx="1" fill="#f3f3f3" /><path d="M9 9h18v16H9z" fill="#b5b5b5" /></g></Svg>
    <Svg w={36} h={33} c="ml-[30px]"><g stroke="none"><path d="M0 2q0-2 2-2h10l4 3h18q2 0 2 2v8H0z" fill="#dd9c07" /><path d="M0 7h11l4-3h19q2 0 2 2v25q0 2-2 2H2q-2 0-2-2z" fill="#fdcb45" /><path d="M6 33V24q0-3 3-3h18q3 0 3 3v9z" fill="#0e75ca" /><path d="M11 26h14" stroke="#0b4e90" strokeWidth="2" /></g></Svg>
    <Svg w={34} h={32} c="ml-[31px]">
      <defs><linearGradient id="cpa" x1="0" y1="0" x2="0" y2="1"><stop stopColor="#1a62dc" /><stop offset=".5" stopColor="#24b2c8" /><stop offset="1" stopColor="#d8d730" /></linearGradient><linearGradient id="cpb" x1="0" y1="0" x2="0" y2="1"><stop stopColor="#b657e8" /><stop offset=".6" stopColor="#f4567c" /><stop offset="1" stopColor="#fb9a3c" /></linearGradient></defs>
      <path d="M9 3q2-3 5-3h7q3 0 4 4l1 5h-6q-3 0-4 4l-3 9H5q-5 0-4-6z" fill="url(#cpa)" stroke="none" />
      <path d="M25 29q-2 3-5 3h-7q-3 0-4-4l-1-5h6q3 0 4-4l3-10h8q5 0 4 7z" fill="url(#cpb)" stroke="none" />
    </Svg>
    <Svg w={36} h={36} c="ml-[31px]"><rect width="36" height="36" fill="#4a4948" stroke="none" /><path d="M15 30a12.500 12.500 0 1 1 6 0" stroke="#10c5fb" strokeWidth="3.200" /></Svg>
    <Svg w={36} h={36} c="ml-[29px]">
      <defs><linearGradient id="edg" x1="0" y1="0" x2="1" y2="0"><stop stopColor="#0f84d8" /><stop offset=".5" stopColor="#28bbe0" /><stop offset="1" stopColor="#5bd94e" /></linearGradient></defs>
      <g stroke="none"><circle cx="18" cy="18" r="18" fill="#1059ac" /><path d="M0 18a18 18 0 0 1 36-2c1 9-12 12-15 7 3-3 1-11-5-11-8 0-15 5-16 6z" fill="url(#edg)" /><path d="M20 21c1 6 9 6 16 3v3l-4 3h-7c-5-1-8-6-5-9z" fill="#d3eac8" /><circle cx="9" cy="27" r="9" fill="#c79ba8" /><circle cx="9" cy="25" r="4.500" fill="#f0cfc6" /><path d="M3 22q6-7 12 0l-5-1z" fill="#6a3f50" /></g>
    </Svg>
    <Svg w={34} h={36} c="ml-8"><g stroke="none"><path d="M17 0l15 8q2 1 2 3v14q0 2-2 3l-15 8-15-8q-2-1-2-3V11q0-2 2-3z" fill="#0ba78c" /><rect x="9" y="9" width="16" height="18" rx="1" fill="#2a4f60" /><rect x="11" y="11" width="12" height="9" fill="#44aee0" /><rect x="9" y="18" width="8" height="7" fill="#fbb62d" /></g></Svg>
    <div className="ml-[31px]"><Chrome /></div>
    <div className="relative ml-[30px]">
      <Chrome />
      <div className="absolute -right-2 -top-[7px] flex h-6 w-6 items-center justify-center rounded-full bg-[#a44ab8] text-[12px] text-white">T</div>
      <div className="absolute -bottom-[11px] left-[14px] h-[5px] w-2 rounded-full bg-[#7d8c78]" />
    </div>
    <div className="relative ml-5 flex h-[57px] w-14 items-center justify-center rounded-[5px] border border-[#d3e5ce] bg-[#e8f4e4]">
      <Svg w={27} h={36}><g stroke="none"><rect x="15" y="0" width="12" height="36" rx="1" fill="#d4900f" /><rect x="7" y="9" width="12" height="27" rx="1" fill="#f0b722" /><rect x="0" y="18" width="11" height="18" rx="1" fill="#f8d758" /></g></Svg>
      <div className="absolute bottom-0 left-[15px] h-[5px] w-6 rounded-full bg-[#444]" />
    </div>
    <Svg w={16} h={9} c="ml-[113px]"><path d="M.5 8.500L8 1l7.500 7.500" strokeWidth="1.600" /></Svg>
    <div className="ml-[27px] w-[44px] text-center text-[17px] leading-[23px]">ENG<br />IN</div>
    <Svg w={25} h={19} c="ml-[22px]"><path d="M1 7a16 16 0 0 1 23 0M4.500 10.500a11.500 11.500 0 0 1 16 0M8 14a6.500 6.500 0 0 1 9 0" strokeWidth="1.600" /><circle cx="12.500" cy="16.500" r="2" fill="currentColor" stroke="none" /></Svg>
    <Svg w={24} h={16} c="ml-3"><path d="M1 5h4l5-4.500v15L5 11H1zM15 5l7 7M22 5l-7 7" strokeWidth="1.500" /></Svg>
    <Svg w={25} h={15} c="ml-3"><rect x="1" y="1" width="20" height="13" rx="3" strokeWidth="1.700" /><rect x="4" y="4" width="10" height="7" fill="currentColor" /><path d="M23.500 5v5" strokeWidth="2" /></Svg>
    <div className="ml-[19px] w-[99px] whitespace-nowrap text-right text-[17px] leading-[24px] tracking-[.5px]">21:35<br />20-04-2025</div>
  </div>
);

export default function App() {
  return (
    <div className="flex h-[1080px] w-[1920px] flex-col overflow-hidden bg-[#f3f2f1] font-['Open_Sans',sans-serif]">
      <div className="relative z-10 h-[240px] shrink-0 bg-[#fafafa] shadow-[0_2px_8px_rgba(0,0,0,0.25)]">
        <TitleBar />
        <Tabs />
        <Ribbon />
      </div>
      <div className="flex h-[732px] shrink-0">
        <Rail />
        <div className="flex w-[1317px] shrink-0 flex-col">
          <div className="flex"><Canvas /><Filters /></div>
          <PageTabs />
        </div>
        <Visualizations />
        <DataPane />
      </div>
      <Status />
      <Taskbar />
    </div>
  );
}
